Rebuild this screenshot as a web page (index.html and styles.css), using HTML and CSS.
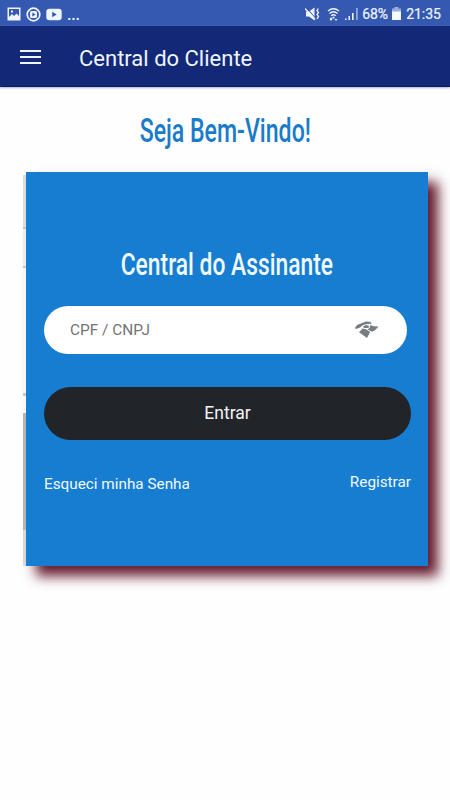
FILE: index.html
```
<!DOCTYPE html>
<html lang="pt-BR">
<head>
  <meta charset="UTF-8">
  <title>Central do Cliente</title>
  <link rel="stylesheet" href="styles.css">
</head>
<body>

<!-- status bar -->
<div class="status">
  <div class="status-left">
    <svg width="14" height="14" viewBox="0 0 14 14"><path fill="#eef5ff" fill-rule="evenodd" d="M.5 .5h13v13H.5zM2 2v8l3-3 2 2 2.500-2.500L12 9V2zM4 3.500h2v2H4z"/></svg>
    <svg width="15" height="15" viewBox="0 0 15 15"><circle cx="7.500" cy="7.500" r="6.300" fill="none" stroke="#eef5ff" stroke-width="1.700"/><rect x="4" y="4" width="7" height="7" rx="1.500" fill="#eef5ff"/><path fill="#3559b0" d="M6.300 5.500l3.200 2-3.200 2z"/></svg>
    <svg width="16" height="13" viewBox="0 0 16 13"><rect x=".3" y=".8" width="15.400" height="11.400" rx="3" fill="#eef5ff"/><path fill="#3559b0" d="M6.200 3.800l4.500 2.700-4.500 2.700z"/></svg>
    <span class="more">...</span>
  </div>
  <div class="status-right">
    <svg class="mute" width="15" height="14" viewBox="0 0 15 14"><path fill="#eef5ff" d="M1 4.500h3L9.500 .5v13L4 9.500H1z"/><path stroke="#3559b0" stroke-width="1" d="M2 1.500l8 9"/><path stroke="#eef5ff" stroke-width="1.300" d="M0 1.500l10 11"/><path fill="none" stroke="#eef5ff" stroke-width="1.300" d="M13.300 1.500l-1.300 2 1.500 2-1.500 2 1.500 2-1.500 2.500"/></svg>
    <svg class="wifi" width="13" height="15" viewBox="0 0 13 15"><path fill="none" stroke="#eef5ff" stroke-width="1.300" d="M1 4Q6.500-.5 12 4M2.500 6.500Q6.500 3 10.500 6.500M4.200 8.800Q6.500 6.800 8.800 8.800"/><path fill="#eef5ff" d="M5.500 9.700h2v1.800h-2zM2.500 12l1.500-1.700L5.500 12l-1.500 2zM7.500 12l1.500 2 1.500-2z"/></svg>
    <svg class="signal" width="14" height="14" viewBox="0 0 14 14"><path fill="#eef5ff" d="M0 11.500h1.500V13H0zM3.500 9H5v4H3.500zM7 6h1.600v7H7z"/><path fill="#8fa7dc" d="M11 1h1.800v12H11z"/></svg>
    <span class="percent">68%</span>
    <svg class="battery" width="9" height="14" viewBox="0 0 9 14"><path fill="#9badd9" d="M2.500 0h4v1.500H9V5H0V1.500h2.500z"/><path fill="#f4f8ff" d="M0 4.500h9V13H0z"/></svg>
    <span class="clock">21:35</span>
  </div>
</div>

<!-- app bar -->
<header class="topbar">
  <div class="menu"><span></span><span></span><span></span></div>
  <div class="topbar-title">Central do Cliente</div>
</header>

<h1 class="welcome"><span>Seja Bem-Vindo!</span></h1>

<!-- login -->
<main class="card">
  <h2 class="card-title"><span>Central do Assinante</span></h2>
  <div class="field">
    <span>CPF / CNPJ</span>
    <svg width="24" height="18" viewBox="0 0 24 18">
      <g fill="#777c80">
        <path d="M0 7L2 4l5-2 4-1.500 4 .2L17 3l-3.500-.2L8 4 5 6.500 1 8z"/>
        <path d="M8 5.500L11 4l3 .7-.5 2.300L9 7z"/>
        <path d="M15.500 4l3 1.200 5 .3-3.500 3.700-3 1.500L12.500 8.500l2-1.500z"/>
        <path d="M7.500 7.500l3.500.8 4.200 2.700L12 17 4 11.300z"/>
      </g>
    </svg>
  </div>
  <div class="button">Entrar</div>
  <div class="links">
    <span class="forgot">Esqueci minha Senha</span>
    <span class="register">Registrar</span>
  </div>
</main>

</body>
</html>
```
FILE: styles.css
```
*{
box-sizing: border-box;
}
body{
margin: 0;
background-color: #fefefe;
font-family: Roboto, sans-serif;
height: 800px;
overflow: hidden;
}
svg{
display: block;
flex: none;
}

.status{
display: flex;
justify-content: space-between;
height: 26px;
padding: 2px 9px 0 7px;
background-color: #3559b0;
color: #eef5ff;
font-size: 14px;
}
.status-left, .status-right{
display: flex;
align-items: center;
white-space: nowrap;
}
.status-left{
gap: 5px;
}
.more{
font-size: 16px;
font-weight: 500;
letter-spacing: -0.2px;
}
.mute{
margin-right: 7px;
}
.wifi{
margin-right: 5px;
}
.signal{
margin-right: 3px;
}
.percent, .clock{
-webkit-text-stroke: 0.2px #eef5ff;
}
.battery{
margin: 0 5px 0 4px;
}

.topbar{
display: flex;
align-items: center;
height: 61px;
padding: 1px 0 0 20px;
background-color: #142878;
border-bottom: 1px solid #0b1b5c;
box-shadow: 0 1px 2px #a9aed0;
color: #eef5ff;
}
.menu{
display: flex;
flex-direction: column;
gap: 4px;
width: 21px;
margin-right: 38px;
}
.menu span{
height: 2px;
background-color: #eef5ff;
}
.topbar-title{
font-size: 22px;
padding-top: 3px;
}

/* narrow headings */
.welcome, .card-title{
margin: 0;
text-align: center;
font-weight: 500;
white-space: nowrap;
}
.welcome span, .card-title span{
display: inline-block;
transform: scaleX(0.7);
}
.welcome{
height: 85px;
padding-top: 24px;
color: #197bc9;
font-size: 33px;
line-height: 40px;
}

.card{
position: relative;
width: 402px;
height: 394px;
margin-left: 26px;
padding: 72px 17px 0 18px;
background-color: #177dd1;
color: #effaff;
box-shadow: 10px 10px 12px #641a2c;
}
/* edge of the slide behind the card */
.card::before{
content: "";
position: absolute;
left: -3px;
top: 3px;
bottom: 0;
width: 3px;
background: linear-gradient(#dcdcdc 0 52px, #c4c4c4 52px 54px, #ededed 54px 91px, #c8c8c8 91px 93px, #f6f6f6 93px 218px, #c8c8c8 218px 221px, #f8f8f8 221px 238px, #b5b5b5 238px 355px, #d8d8d8 355px);
}
.card-title{
height: 62px;
font-size: 32px;
line-height: 40px;
}
.card-title span{
transform: scaleX(0.713);
margin-left: -2px;
}
.field{
display: flex;
align-items: center;
justify-content: space-between;
width: 363px;
height: 48px;
padding: 0 28px 0 26px;
border-radius: 24px;
background-color: #fff;
color: #747474;
font-size: 15.400px;
}
.button{
height: 53px;
margin-top: 33px;
border-radius: 27px;
background-color: #212529;
color: #f4f4f6;
font-size: 17.500px;
line-height: 53px;
text-align: center;
}
.links{
display: flex;
justify-content: space-between;
margin-top: 33px;
font-size: 15.300px;
line-height: 19px;
}
.forgot{
padding-top: 2px;
}
```
